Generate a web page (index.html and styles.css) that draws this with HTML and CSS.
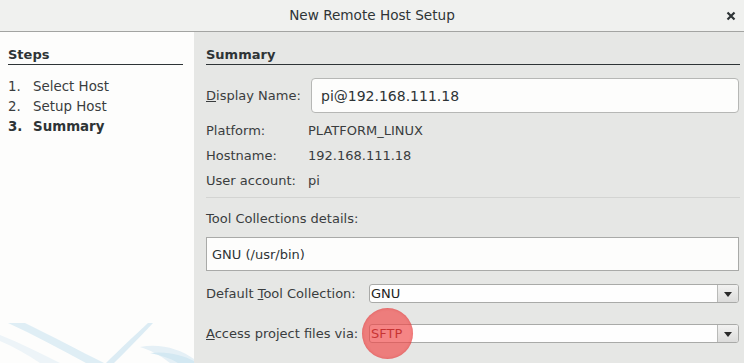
FILE: index.html
```html
<!DOCTYPE html>
<html>
<head>
<meta charset="utf-8">
<link rel="stylesheet" href="styles.css">
</head>
<body>
<div class="window">
  <header class="titlebar">
    <span class="title">New Remote Host Setup</span>
    <span class="close" aria-label="close">
      <svg width="10" height="10" viewBox="0 0 10 10"><path d="M1.5 1.5 L8.5 8.5 M8.5 1.5 L1.5 8.5" stroke="#2e3436" stroke-width="2.2" stroke-linecap="butt"/></svg>
    </span>
  </header>
  <div class="content">
    <aside class="steps">
      <div class="steps-head">Steps</div>
      <ol class="step-list">
        <li><span class="num">1.</span><span>Select Host</span></li>
        <li><span class="num">2.</span><span>Setup Host</span></li>
        <li class="current"><span class="num">3.</span><span>Summary</span></li>
      </ol>
      <svg class="decor" width="194" height="40" viewBox="0 0 194 40">
        <path d="M0 12 C 20 20, 40 30, 60 40 L 40 40 C 28 32, 14 24, 0 18 Z" fill="#edf4f8"/>
        <path d="M8 0 L 25 0 C 50 12, 80 28, 104 40 L 86 40 C 60 26, 34 12, 8 0 Z" fill="#dfeef5"/>
        <path d="M153 0 L 148 0 C 135 12, 118 28, 106 40 L 114 40 C 126 28, 140 14, 153 0 Z" fill="#dcecf4"/>
        <path d="M140 24 C 160 20, 180 26, 194 36 L 194 40 L 170 40 C 160 32, 150 27, 140 24 Z" fill="#e5f0f6"/>
        <path d="M150 30 C 168 28, 182 32, 194 38 L 194 40 L 178 40 C 170 35, 160 32, 150 30 Z" fill="#d3e8f2"/>
      </svg>
    </aside>
    <main class="panel">
      <div class="panel-head">Summary</div>
      <div class="row-input">
        <label class="lbl-name"><u>D</u>isplay Name:</label>
        <div class="textfield">pi@192.168.111.18</div>
      </div>
      <div class="info">
        <div class="info-row"><span class="info-lbl">Platform:</span><span>PLATFORM_LINUX</span></div>
        <div class="info-row"><span class="info-lbl">Hostname:</span><span>192.168.111.18</span></div>
        <div class="info-row"><span class="info-lbl">User account:</span><span>pi</span></div>
      </div>
      <hr class="sep">
      <div class="tc-label">Tool Collections details:</div>
      <div class="tc-box">GNU (/usr/bin)</div>
      <div class="combo-row first">
        <label class="combo-lbl">Default <u>T</u>ool Collection:</label>
        <div class="combo"><span class="combo-val">GNU</span><span class="combo-btn"><i class="arrow"></i></span></div>
      </div>
      <div class="combo-row second">
        <label class="combo-lbl"><u>A</u>ccess project files via:</label>
        <div class="combo"><span class="combo-val sftp">SFTP</span><span class="combo-btn"><i class="arrow"></i></span></div>
        <span class="highlight"></span>
      </div>
    </main>
  </div>
</div>
</body>
</html>
```
FILE: styles.css
```css
* { box-sizing: border-box; }
html, body { margin: 0; padding: 0; }
body {
  width: 744px;
  height: 363px;
  overflow: hidden;
  font-family: "DejaVu Sans", "Liberation Sans", sans-serif;
  font-size: 13px;
  color: #2e3436;
  background: #e6e7e5;
}
.window { width: 744px; height: 363px; display: flex; flex-direction: column; }
.titlebar {
  height: 32px;
  flex: none;
  background: #f0f1ef;
  border-bottom: 1px solid #a3a4a2;
  display: flex;
  align-items: center;
  justify-content: center;
  position: relative;
}
.title { font-size: 13.6px; color: #2e3436; padding-bottom: 1px; }
.close { position: absolute; right: 8px; top: 11px; width: 10px; height: 10px; display: block; line-height: 0; }
.content { flex: 1; display: flex; min-height: 0; }
.steps {
  width: 194px;
  flex: none;
  background: #fdfdfc;
  padding: 0 11px 0 8px;
  position: relative;
}
.steps-head {
  font-weight: bold;
  padding-top: 14px;
  line-height: 18px;
  border-bottom: 1px solid #2e3436;
}
.step-list { list-style: none; margin: 12px 0 0; padding: 0; }
.step-list li { display: flex; line-height: 20px; color: #3a3d3e; font-size: 13.4px; }
.step-list .num { width: 25px; flex: none; }
.step-list li.current { font-weight: bold; color: #2e3436; }
.decor { position: absolute; left: 0; bottom: 0; }
.panel {
  flex: 1;
  padding: 0 4px 0 12px;
  position: relative;
  color: #3a3d3e;
}
.panel-head {
  font-weight: bold;
  padding-top: 14px;
  line-height: 18px;
  border-bottom: 1px solid #2e3436;
  color: #2e3436;
}
.row-input { display: flex; align-items: center; margin-top: 13px; margin-right: 1px; }
.lbl-name { width: 105px; flex: none; }
.textfield {
  flex: 1;
  height: 35px;
  background: #fdfdfc;
  border: 1px solid #b6b7b5;
  border-radius: 4px;
  padding: 0 9px;
  display: flex;
  align-items: center;
  font-size: 14px;
  color: #2e3436;
}
.info { margin-top: 5px; }
.info-row { display: flex; line-height: 25px; }
.info-lbl { width: 102px; flex: none; }
.sep { border: 0; border-top: 1px solid #d3d4d2; margin: 4px 0 0; height: 0; }
.tc-label { margin-top: 11px; line-height: 20px; }
.tc-box {
  margin-top: 8px;
  margin-right: 1px;
  height: 34px;
  background: #fdfdfc;
  border: 1px solid #a9aaa8;
  padding: 0 5px;
  display: flex;
  align-items: center;
  color: #2e3436;
}
.combo-row { display: flex; align-items: center; margin-right: 1px; position: relative; }
.combo-row.first { margin-top: 13px; }
.combo-row.second { margin-top: 21px; }
.combo-lbl { width: 163px; flex: none; }
.combo {
  flex: 1;
  height: 19px;
  display: flex;
  background: #fefefe;
  border: 1px solid #a9aaa8;
  border-radius: 3px;
  overflow: hidden;
}
.combo-val { flex: 1; padding-left: 1px; line-height: 17px; color: #222; }
.combo-btn {
  width: 21px;
  flex: none;
  border-left: 1px solid #b9bab8;
  background: linear-gradient(#f2f2f1, #dcdcdb);
  display: flex;
  align-items: center;
  justify-content: center;
}
.arrow {
  display: block;
  width: 0; height: 0;
  border-left: 4px solid transparent;
  border-right: 4px solid transparent;
  border-top: 5px solid #2a2a2a;
  margin-top: 1px;
}
.sftp { color: #7a1010; }
.highlight {
  position: absolute;
  left: 156px;
  top: -16px;
  width: 51px;
  height: 51px;
  border-radius: 50%;
  background: rgba(240, 70, 70, 0.66);
  box-shadow: inset 0 0 3px rgba(200, 40, 40, 0.4);
  pointer-events: none;
}
```
